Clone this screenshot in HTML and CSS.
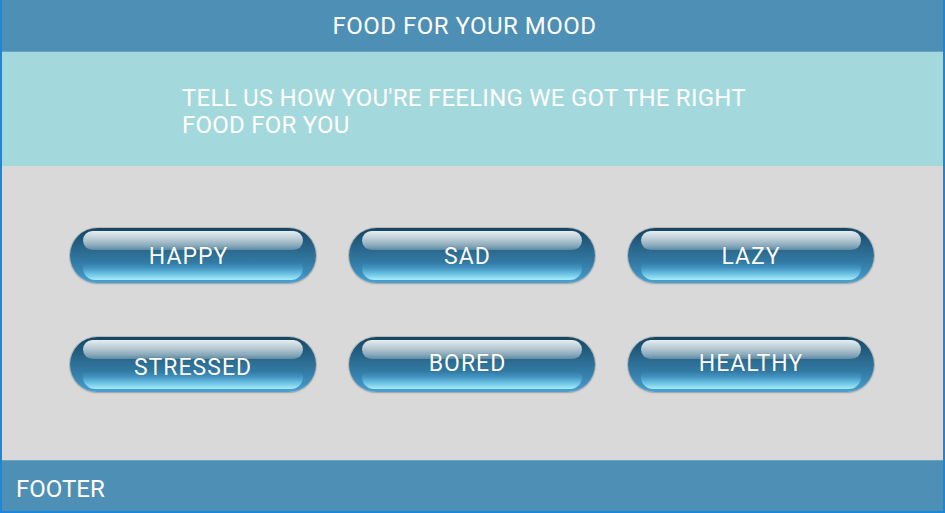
FILE: index.html
```html
<!DOCTYPE html>
<html>
<head>
<meta charset="utf-8">
<link rel="stylesheet" href="styles.css">
</head>
<body>
<div class="frame">
  <header class="top">FOOD FOR YOUR MOOD</header>
  <section class="intro">
    <p class="intro-text">TELL US HOW YOU'RE FEELING WE GOT THE RIGHT FOOD FOR YOU</p>
  </section>
  <main class="moods">
    <button class="mood mood-left"><span>HAPPY</span></button>
    <button class="mood mood-left"><span>SAD</span></button>
    <button class="mood"><span>LAZY</span></button>
    <button class="mood mood-low"><span>STRESSED</span></button>
    <button class="mood mood-left mood-high"><span>BORED</span></button>
    <button class="mood mood-high"><span>HEALTHY</span></button>
  </main>
  <footer class="bottom">FOOTER</footer>
</div>
</body>
</html>
```

FILE: styles.css
```css
html, body {
  margin: 0;
  padding: 0;
  height: 100%;
}
body {
  font-family: Roboto, "Noto Sans", sans-serif;
  background: #d9d9d9;
}
.frame {
  height: 513px;
  box-sizing: border-box;
  border-left: 2px solid #1b86de;
  border-right: 2px solid #1b86de;
  border-bottom: 2px solid #1b86de;
  display: flex;
  flex-direction: column;
}
.top {
  height: 52px;
  flex: none;
  box-sizing: border-box;
  background: #4e8fb5;
  color: #fff;
  font-size: 24px;
  letter-spacing: 0.5px;
  display: flex;
  align-items: center;
  justify-content: center;
  padding: 0 16px 0 0;
  border-bottom: 1px solid #6aa4c4;
}
.intro {
  height: 114px;
  flex: none;
  box-sizing: border-box;
  background: #a3d9dc;
  padding: 0 0 0 180px;
}
.intro-text {
  margin: 0;
  padding-top: 33px;
  width: 600px;
  color: #fff;
  font-size: 24px;
  letter-spacing: 0.25px;
  line-height: 27px;
}
.moods {
  flex: 1;
  background: #d9d9d9;
  display: grid;
  grid-template-columns: repeat(3, 246px);
  grid-auto-rows: 55px;
  column-gap: 33px;
  row-gap: 54px;
  padding: 62px 0 0 68px;
}
.mood {
  position: relative;
  width: 246px;
  height: 55px;
  border: none;
  padding: 0;
  border-radius: 28px;
  cursor: pointer;
  font-family: inherit;
  font-size: 23px;
  letter-spacing: 1px;
  color: #fff;
  background: linear-gradient(to bottom, #15445f 0%, #1f587a 20%, #2d6d93 45%, #327aa3 62%, #3f90bf 85%, #4aa1d0 100%);
  box-shadow: 0 0 0 1px rgba(150, 160, 165, 0.55), 0 1px 2px rgba(0, 0, 0, 0.2);
  overflow: hidden;
}
.mood::before {
  content: "";
  position: absolute;
  left: 13px;
  right: 13px;
  top: 3px;
  height: 19px;
  border-radius: 10px;
  background: linear-gradient(to bottom, #e6edf0 0%, #bccdd6 40%, #88a8ba 78%, #5f8aa3 100%);
}
.mood::after {
  content: "";
  position: absolute;
  left: 13px;
  right: 13px;
  bottom: 3px;
  height: 17px;
  border-radius: 4px 4px 12px 12px;
  background: linear-gradient(to bottom, rgba(60, 135, 180, 0) 0%, #3f8fbd 25%, #6cc3e4 65%, #a8ebf8 100%);
}
.mood span {
  position: relative;
  z-index: 1;
  display: block;
  margin-top: 2px;
  text-shadow: 0 0 1px rgba(20, 60, 90, 0.4);
}
.mood-left span {
  margin-right: 9px;
}
.mood-low span {
  margin-top: 6px;
}
.mood-high span {
  margin-top: -2px;
}
.bottom {
  height: 51px;
  flex: none;
  box-sizing: border-box;
  background: #4e8fb5;
  color: #fff;
  font-size: 24px;
  padding: 6px 0 0 14px;
  display: flex;
  align-items: center;
  border-top: 1px solid #6aa4c4;
}
```
